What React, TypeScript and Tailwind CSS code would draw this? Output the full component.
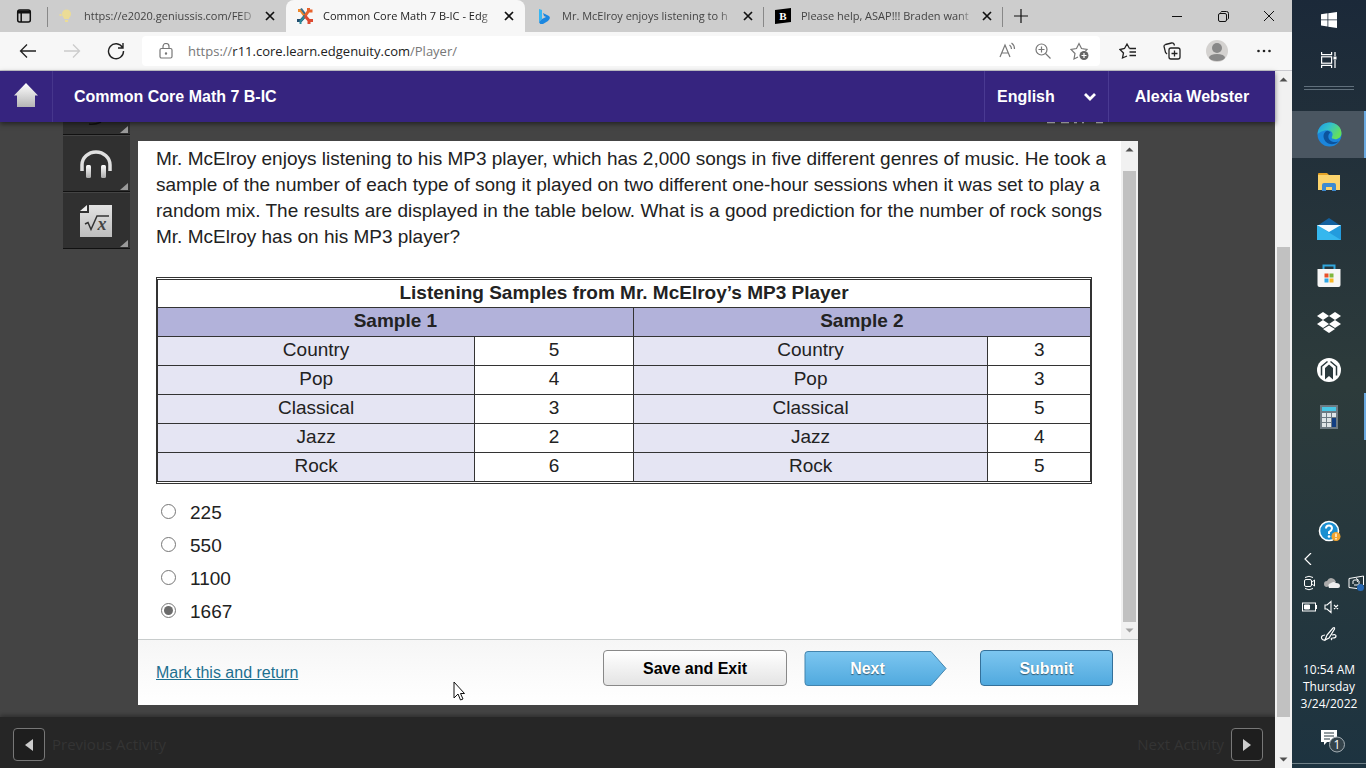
import { useState } from 'react';
import type { ReactNode } from 'react';

const GENRES = [
  { name: 'Country', first: 5, second: 3 },
  { name: 'Pop', first: 4, second: 3 },
  { name: 'Classical', first: 3, second: 5 },
  { name: 'Jazz', first: 2, second: 4 },
  { name: 'Rock', first: 6, second: 5 },
];

const ANSWERS = ['225', '550', '1100', '1667'];

function CloseIcon() {
  return (
    <svg className="h-[10px] w-[10px]" viewBox="0 0 10 10" fill="none" stroke="#111" strokeWidth="1.7">
      <path d="M1 1l8 8M9 1L1 9" />
    </svg>
  );
}

function Tab({ title, icon, active, divider }: { title: string; icon: ReactNode; active?: boolean; divider?: boolean }) {
  return (
    <div
      className={`relative flex w-[239px] shrink-0 items-center pl-[10px] ${
        active ? 'rounded-t-lg bg-[#f7f7f7] text-[#222]' : 'text-[#444]'
      }`}
    >
      <span className="flex w-[18px] shrink-0 justify-center">{icon}</span>
      <span className="ml-[9px] w-[174px] overflow-hidden whitespace-nowrap text-[11px] leading-4 [mask-image:linear-gradient(to_right,black_90%,transparent)]">
        {title}
      </span>
      <button aria-label="Close tab" className="ml-[7px] p-0">
        <CloseIcon />
      </button>
      {divider && <span className="absolute right-0 top-[7px] h-5 w-px bg-[#888]" />}
    </div>
  );
}

function TabStrip() {
  return (
    <div className="flex h-8 shrink-0 bg-[#cdcdcd]">
      <div className="flex w-[47px] shrink-0 items-center justify-center border-[#888]">
        <svg className="h-4 w-4" viewBox="0 0 16 16" fill="none" stroke="#111" strokeWidth="1.5">
          <rect x="1.7" y="2" width="12.6" height="12" rx="2" />
          <path d="M2 4h12" strokeWidth="3" />
          <path d="M5.2 5v9" />
        </svg>
      </div>
      <span className="-mr-px mt-[7px] h-5 w-px bg-[#888]" />
      <Tab
        title="https://e2020.geniussis.com/FED"
        icon={
          <svg className="h-4 w-4" viewBox="0 0 16 16" fill="#ebdc96">
            <circle cx="8.500" cy="6" r="4.500" />
            <path d="M6 9h5v2H6zM7 12h3v2H7zM1.500 6h2v2h-2z" />
          </svg>
        }
      />
      <Tab
        active
        title="Common Core Math 7 B-IC - Edg"
        icon={
          <svg className="h-[18px] w-[18px]" viewBox="0 0 18 18" fill="none" strokeWidth="3">
            <path d="M2 3.500h3L9 9" stroke="#f0882c" />
            <path d="M5 1.500l4.500 6" stroke="#3b6d8c" strokeWidth="2" />
            <path d="M12.500 1v3L9 9M16.500 4H13" stroke="#e8632c" />
            <path d="M1 13.500h4L9 9" stroke="#234e70" />
            <path d="M4.500 17v-3L9 9" stroke="#2d8a9a" strokeWidth="2" />
            <path d="M17 13.500h-4L9 9M13 17v-3" stroke="#dd4a30" />
          </svg>
        }
      />
      <Tab
        divider
        title="Mr. McElroy enjoys listening to h"
        icon={
          <svg className="h-4 w-4" viewBox="0 0 16 16">
            <path d="M3 1l3 1v9l-3 3z" fill="#38b6f2" />
            <path d="M3 14l3-3 4-2-2-1-1-3 6 3c2 2 0 4-1 5l-5 3c-2 1-3 0-4-2z" fill="#1b87e0" />
          </svg>
        }
      />
      <Tab
        divider
        title="Please help, ASAP!!! Braden want"
        icon={
          <svg className="h-4 w-4" viewBox="0 0 16 16">
            <path d="M0 2l16-2v14L0 16z" fill="#000" />
            <text x="8" y="12" textAnchor="middle" fontSize="11" fontWeight="700" fontFamily="Liberation Serif, serif" fill="#fff">
              B
            </text>
          </svg>
        }
      />
      <button aria-label="New tab" className="flex w-9 items-center justify-center">
        <svg className="h-[14px] w-[14px]" viewBox="0 0 14 14" stroke="#111" strokeWidth="1.2">
          <path d="M7 0v14M0 7h14" />
        </svg>
      </button>
      <div className="ml-auto flex">
        <button aria-label="Minimize" className="flex w-[46px] items-center justify-center">
          <svg className="h-[10px] w-[10px]" viewBox="0 0 10 10" stroke="#111">
            <path d="M0 5.500h10" />
          </svg>
        </button>
        <button aria-label="Restore" className="flex w-[46px] items-center justify-center">
          <svg className="h-[11px] w-[11px]" viewBox="0 0 11 11" fill="none" stroke="#111">
            <rect x="0.500" y="2.500" width="8" height="8" rx="1.500" />
            <path d="M2.500 1.500Q3 .5 4 .5h4.500q2 0 2 2V7q0 1-1 1.500" />
          </svg>
        </button>
        <button aria-label="Close window" className="flex w-[46px] items-center justify-center">
          <svg className="h-[10px] w-[10px]" viewBox="0 0 10 10" stroke="#111">
            <path d="M0 0l10 10M10 0L0 10" />
          </svg>
        </button>
      </div>
    </div>
  );
}

function Toolbar() {
  return (
    <div className="flex h-[39px] shrink-0 items-center border-b border-[#c9c9cf] bg-[#f7f7f7]">
      <button aria-label="Back" className="ml-[19px]">
        <svg className="h-[18px] w-[18px]" viewBox="0 0 18 18" fill="none" stroke="#222" strokeWidth="1.3">
          <path d="M17 9H1.500M8 2.500L1.500 9 8 15.500" />
        </svg>
      </button>
      <button aria-label="Forward" className="ml-[26px]">
        <svg className="h-[18px] w-[18px]" viewBox="0 0 18 18" fill="none" stroke="#ccc" strokeWidth="1.300">
          <path d="M1 9h15.500M10 2.500L16.500 9 10 15.500" />
        </svg>
      </button>
      <button aria-label="Refresh" className="ml-[26px]">
        <svg className="h-[18px] w-[18px]" viewBox="0 0 18 18" fill="none" stroke="#222" strokeWidth="1.400">
          <path d="M15.500 5.500A7.500 7.500 0 1 0 16.500 9M16 1v5h-5" />
        </svg>
      </button>
      <div className="ml-[17px] flex h-[30px] flex-1 items-center rounded bg-white pl-4 pr-[10px]">
        <svg className="h-4 w-4" viewBox="0 0 16 16" fill="none" stroke="#777" strokeWidth="1.200">
          <rect x="2" y="5.500" width="12" height="9.500" rx="1.500" />
          <path d="M5 5.500V3.500a3 3 0 0 1 6 0v2" />
          <circle cx="8" cy="10.500" r="0.600" fill="#777" />
        </svg>
        <div className="ml-[14px] flex-1 text-[13px] leading-5 text-[#777]">
          https://<span className="text-[#222]">r11.core.learn.edgenuity.com</span>/Player/
        </div>
        <div className="flex items-center gap-[18px]">
          <button aria-label="Read aloud">
            <svg className="h-[18px] w-[18px]" viewBox="0 0 18 18" fill="none" stroke="#777" strokeWidth="1.200">
              <path d="M2 15L7 3l5 12M4 11h6M11.500 3q2 1.500 2 4M13.500 1q3 2 3 6" />
            </svg>
          </button>
          <button aria-label="Zoom">
            <svg className="h-[18px] w-[18px]" viewBox="0 0 18 18" fill="none" stroke="#777" strokeWidth="1.200">
              <circle cx="7.500" cy="7.500" r="5.500" />
              <path d="M11.500 11.500l5 5M4.500 7.500h6M7.500 4.500v6" />
            </svg>
          </button>
          <button aria-label="Add to favorites">
            <svg className="h-5 w-5" viewBox="0 0 20 20" fill="none" stroke="#777" strokeWidth="1.200">
              <path d="M8 16l-4 2 1-5.500L1 8.500l5.500-1L9 2.500l2.500 5 5.500 1-1.500 1.500" />
              <circle cx="14" cy="14.500" r="4.500" fill="#666" stroke="none" />
              <path d="M14 12v5M11.500 14.500h5" stroke="#fff" />
            </svg>
          </button>
        </div>
      </div>
      <div className="ml-[18px] mr-5 flex items-center">
        <button aria-label="Favorites" className="flex w-5 justify-center">
          <svg className="h-[18px] w-[18px]" viewBox="0 0 18 18" fill="none" stroke="#222" strokeWidth="1.300">
            <path d="M8 14l-4.500 2 1-5L1 7.500l4.500-1L8 2l2.500 4.500M10.500 6.500H17M10.500 10H17M10.500 13.500H17" />
          </svg>
        </button>
        <button aria-label="Collections" className="ml-6 flex w-5 justify-center">
          <svg className="h-[18px] w-[18px]" viewBox="0 0 18 18" fill="none" stroke="#222" strokeWidth="1.300">
            <rect x="6" y="6" width="11" height="11" rx="2" />
            <path d="M11.500 8.500v6M8.500 11.500h6M4 12L2.500 10.500 1 4.500Q.8 3 2.500 2.500L8.500 1Q10 .8 11 2l.5 1.500" />
          </svg>
        </button>
        <button aria-label="Profile" className="ml-6 flex w-[22px] justify-center">
          <svg className="h-[22px] w-[22px]" viewBox="0 0 22 22">
            <circle cx="11" cy="11" r="11" fill="#d4d2d0" />
            <circle cx="11" cy="8" r="5" fill="#888" />
            <ellipse cx="11" cy="17.500" rx="8" ry="3.500" fill="#888" />
          </svg>
        </button>
        <button aria-label="Settings and more" className="ml-7 flex w-4 justify-center">
          <svg className="h-4 w-4" viewBox="0 0 16 16" fill="#222">
            <circle cx="2.500" cy="8" r="1.300" />
            <circle cx="8" cy="8" r="1.300" />
            <circle cx="13.500" cy="8" r="1.300" />
          </svg>
        </button>
      </div>
    </div>
  );
}

function CourseHeader() {
  return (
    <header className="relative z-10 flex h-[51px] shrink-0 items-stretch bg-[#36247f] text-[16px] font-bold text-white shadow-[0_2px_5px_rgba(0,0,0,0.5)]">
      <a href="#home" aria-label="Home" className="flex w-[53px] items-center justify-center border-r border-[#46368c] pb-1">
        <svg className="h-6 w-6" viewBox="0 0 24 24">
          <defs>
            <linearGradient id="home" x1="0" y1="0" x2="0" y2="1">
              <stop offset="0" stopColor="#fff" />
              <stop offset="1" stopColor="#b5b5b5" />
            </linearGradient>
          </defs>
          <path d="M12 0l12 12.500h-3V24H3V12.500H0z" fill="url(#home)" />
        </svg>
      </a>
      <h1 className="flex items-center pl-[21px]">Common Core Math 7 B-IC</h1>
      <div className="relative ml-auto flex w-[124px] items-center border-l border-[#4a3a92]">
        <select aria-label="Language" className="h-full w-full appearance-none bg-transparent pl-3 outline-none">
          <option>English</option>
        </select>
        <svg className="pointer-events-none absolute right-[11px] h-3 w-[14px]" viewBox="0 0 14 12" fill="none" stroke="#fff" strokeWidth="2.800">
          <path d="M2 3l5 5 5-5" />
        </svg>
      </div>
      <div className="flex w-[167px] items-center justify-center border-l border-[#4a3a92]">Alexia Webster</div>
    </header>
  );
}

function Tool({ label, children }: { label: string; children: ReactNode }) {
  return (
    <button
      aria-label={label}
      className="relative flex h-14 w-[67px] items-center justify-center border-b border-[#111] bg-[#303030] pr-[2px]"
    >
      {children}
      <Corner />
    </button>
  );
}

function Corner() {
  return (
    <svg className="absolute bottom-px right-[2px] h-[7px] w-2" viewBox="0 0 8 7">
      <path d="M8 0v7H0z" fill="#999" />
    </svg>
  );
}

function ToolRail() {
  return (
    <nav className="ml-[63px] flex w-[67px] shrink-0 flex-col gap-px">
      <div className="relative h-[13px] border-b border-[#111] bg-[#303030]">
        <svg className="mx-auto h-2 w-7" viewBox="0 0 28 8">
          <path d="M6 2q6 1 12-2" fill="none" stroke="#111" strokeWidth="1.500" />
        </svg>
        <Corner />
      </div>
      <Tool label="Audio">
        <svg className="h-8 w-8" viewBox="0 0 32 32">
          <defs>
            <linearGradient id="phones" x1="0" y1="0" x2="0" y2="1">
              <stop offset="0" stopColor="#fff" />
              <stop offset="1" stopColor="#aaa" />
            </linearGradient>
          </defs>
          <path d="M2 23v-6a14 13 0 0 1 28 0v6" fill="none" stroke="#e0e0e0" strokeWidth="3.500" />
          <rect x="6" y="17" width="5" height="13" rx="1.500" fill="url(#phones)" />
          <rect x="21" y="17" width="5" height="13" rx="1.500" fill="url(#phones)" />
        </svg>
      </Tool>
      <Tool label="Formulas">
        <svg className="h-[34px] w-[34px]" viewBox="0 0 34 34">
          <defs>
            <linearGradient id="sheet" x1="0" y1="0" x2="0" y2="1">
              <stop offset="0" stopColor="#e2e2e2" />
              <stop offset="1" stopColor="#bdbdbd" />
            </linearGradient>
          </defs>
          <path d="M10 1h23v32H1V9h9z" fill="url(#sheet)" />
          <path d="M8 1v6H1z" fill="#eee" />
          <path d="M6 20l3-1.500 3 7L18 12h12" fill="none" stroke="#333" strokeWidth="1.500" />
          <text x="23" y="26" textAnchor="middle" fontSize="18" fontStyle="italic" fontWeight="700" fontFamily="Liberation Serif, serif" fill="#444">
            x
          </text>
        </svg>
      </Tool>
    </nav>
  );
}

function Arrow({ up, color }: { up?: boolean; color: string }) {
  return (
    <svg className="h-[17px] w-full shrink-0" viewBox="0 0 17 17">
      <path d={up ? 'M4.500 10.500h8l-4-4z' : 'M4.500 6.500h8l-4 4z'} fill={color} />
    </svg>
  );
}

function SampleTable() {
  const heading = 'border border-[#333] p-0 pb-[2px]';
  const label = 'border border-[#333] bg-[#e5e5f3] p-0 pb-[2px]';
  const value = 'border border-[#333] p-0 pb-[2px]';
  return (
    <div className="border border-[#333] pb-px pt-px">
      <table className="w-full table-fixed border-collapse text-center text-[19px] leading-6">
        <colgroup>
          <col className="w-[34%]" />
          <col className="w-[17%]" />
          <col className="w-[38%]" />
          <col className="w-[11%]" />
        </colgroup>
        <thead>
          <tr className="h-7">
            <th colSpan={4} className={heading}>
              Listening Samples from Mr. McElroy’s MP3 Player
            </th>
          </tr>
          <tr className="h-[29px] bg-[#b2b2da]">
            <th colSpan={2} className={heading}>Sample 1</th>
            <th colSpan={2} className={heading}>Sample 2</th>
          </tr>
        </thead>
        <tbody>
          {GENRES.map((genre) => (
            <tr key={genre.name} className="h-[29px]">
              <td className={label}>{genre.name}</td>
              <td className={value}>{genre.first}</td>
              <td className={label}>{genre.name}</td>
              <td className={value}>{genre.second}</td>
            </tr>
          ))}
        </tbody>
      </table>
    </div>
  );
}

function Question() {
  const [answer, setAnswer] = useState('1667');

  return (
    <div className="flex min-h-0 flex-1 text-[#222]">
      <div className="min-w-0 flex-1 pl-[18px] pt-[5px]">
        <p className="text-[19px] leading-[26px]">
          Mr. McElroy enjoys listening to his MP3 player, which has 2,000 songs in five different genres of music. He took a
          sample of the number of each type of song it played on two different one-hour sessions when it was set to play a
          random mix. The results are displayed in the table below. What is a good prediction for the number of rock songs Mr.
          McElroy has on his MP3 player?
        </p>
        <div className="mr-[29px] mt-[27px]">
          <SampleTable />
        </div>
        <fieldset className="mt-3">
          {ANSWERS.map((option) => (
            <label key={option} className="flex h-[33px] items-center pl-[5px] text-[19px] leading-6">
              <input
                type="radio"
                name="answer"
                value={option}
                checked={answer === option}
                onChange={() => setAnswer(option)}
                className="mb-[3px] mr-[14px] h-[15px] w-[15px] appearance-none rounded-full border border-[#767676] bg-white bg-clip-content p-[2px] checked:bg-[#6b6b6b]"
              />
              {option}
            </label>
          ))}
        </fieldset>
      </div>
      <div className="flex w-[17px] shrink-0 flex-col bg-[#f1f1f1]">
        <Arrow up color="#505050" />
        <div className="mx-[2px] mt-[13px] flex-1 bg-[#c1c1c1]" />
        <Arrow color="#a3a3a3" />
      </div>
    </div>
  );
}

function Actions() {
  return (
    <div className="flex h-[66px] shrink-0 items-start border-t border-[#c8cccc] bg-linear-to-b from-[#f6f6f6] to-white pl-[18px] pr-[25px] pt-[10px] text-[16px]">
      <a href="#return" className="mt-3 leading-[22px] text-[#1d7090] underline">
        Mark this and return
      </a>
      <button className="ml-auto h-9 w-[184px] rounded border border-[#888] bg-linear-to-b from-white to-[#e4e4e4] pt-px font-bold text-black">
        Save and Exit
      </button>
      <button className="relative ml-[17px] h-9 w-[143px] pr-4 pt-px font-bold text-white [text-shadow:0_1px_1px_rgba(0,0,0,0.5)]">
        <svg className="absolute inset-0 h-full w-full" viewBox="0 0 143 36">
          <defs>
            <linearGradient id="next" x1="0" y1="0" x2="0" y2="1">
              <stop offset="0" stopColor="#7cc6f0" />
              <stop offset="1" stopColor="#50a9de" />
            </linearGradient>
          </defs>
          <path d="M4 1.500h123L142 18.500 127 35.500H4q-3 0-3-3V4.500q0-3 3-3z" fill="url(#next)" stroke="#4384ad" />
        </svg>
        <span className="relative">Next</span>
      </button>
      <button className="ml-[33px] h-9 w-[133px] rounded border border-[#34709a] bg-linear-to-b from-[#7cc6f0] to-[#50a9de] pt-px font-bold text-white [text-shadow:0_1px_1px_rgba(0,0,0,0.5)]">
        Submit
      </button>
    </div>
  );
}

function ActivityFooter() {
  const box = 'flex h-[33px] w-8 items-center justify-center rounded border border-[#777] bg-[#1e1e1e]';
  return (
    <footer className="flex h-[51px] shrink-0 items-center justify-between bg-[#262626] pl-[13px] pr-3 pt-1 font-['Open_Sans',sans-serif] text-[15px] text-[#343434] shadow-[0_-2px_4px_rgba(0,0,0,0.3)]">
      <div className="flex items-center gap-[7px]">
        <button aria-label="Go to previous activity" className={box}>
          <svg className="h-3 w-2" viewBox="0 0 8 12">
            <path d="M8 0v12L0 6z" fill="#ccc" />
          </svg>
        </button>
        Previous Activity
      </div>
      <div className="flex items-center gap-[7px]">
        Next Activity
        <button aria-label="Go to next activity" className={box}>
          <svg className="h-3 w-2" viewBox="0 0 8 12">
            <path d="M0 0v12l8-6z" fill="#ccc" />
          </svg>
        </button>
      </div>
    </footer>
  );
}

function TaskButton({ label, active, running, children }: { label: string; active?: boolean; running?: boolean; children: ReactNode }) {
  return (
    <button
      aria-label={label}
      className={`flex h-[47px] w-full items-center justify-center border-[#6aa9e0] ${active ? 'bg-[#4a5661]' : ''} ${
        active || running ? 'border-r-2 pl-[2px]' : ''
      }`}
    >
      {children}
    </button>
  );
}

function Taskbar() {
  return (
    <aside className="flex w-[74px] shrink-0 flex-col items-center bg-linear-to-b from-[#1b2939] via-[#2d3b3b] to-[#1d3340] font-['Open_Sans',sans-serif] text-white">
      <button aria-label="Start" className="flex h-10 items-center">
        <svg className="h-4 w-4" viewBox="0 0 16 16" fill="#fff">
          <path d="M0 2.200l6.500-.9v6.200H0zM7.300 1.200L16 0v7.500H7.300zM0 8.300h6.500v6.200L0 13.600zM7.300 8.300H16V16l-8.700-1.200z" />
        </svg>
      </button>
      <button aria-label="Task view" className="flex h-10 items-center">
        <svg className="h-4 w-4" viewBox="0 0 16 16" fill="none" stroke="#fff" strokeWidth="1.200">
          <path d="M.6 0v2.600h10V0M.6 16v-2.600h10V16M14 0v4M14 8v8" />
          <rect x="0.600" y="4.800" width="10" height="6.400" />
          <path d="M12.500 6h3" strokeWidth="3" />
        </svg>
      </button>
      <div className="mb-[21px] mt-[6px] h-1 w-[50px] border-y border-[#61707c]" />

      <TaskButton label="Edge" active>
        <svg className="h-[25px] w-[25px]" viewBox="0 0 24 24">
          <defs>
            <linearGradient id="edgeTop" x1="0" y1="0" x2="1" y2="0.500">
              <stop offset="0" stopColor="#1c9be8" />
              <stop offset="0.500" stopColor="#35c1c8" />
              <stop offset="1" stopColor="#66e05a" />
            </linearGradient>
          </defs>
          <circle cx="12" cy="12" r="11.500" fill="#1b86dc" />
          <path d="M.5 12C1 4 7 .5 12 .5c7 0 11.500 5 11.500 10 0 4-3 6-6 6-2.500 0-4-1-3-2.500C16 11 14 8 10 8 5 8 1.500 10.500.5 12z" fill="url(#edgeTop)" />
          <path d="M10 8.500c-4 1-5 6-2 10 3 3.500 9 4 13 0-2 1-7 1.500-9-1.500-2-2.500-1-6 1-7-1-1-2-1.500-3-1.500z" fill="#0c539d" />
        </svg>
      </TaskButton>
      <TaskButton label="File Explorer">
        <svg className="h-[22px] w-[22px]" viewBox="0 0 22 22">
          <path d="M0 3q0-1 1-1h8l2 2h-11z" fill="#e5a326" />
          <path d="M0 4h22v15H0z" fill="#fcd46c" />
          <path d="M4 20v-6q0-2 2-2h10q2 0 2 2v6h-4v-4H8v4z" fill="#3e8bd0" />
        </svg>
      </TaskButton>
      <TaskButton label="Mail">
        <svg className="h-6 w-6" viewBox="0 0 24 24">
          <path d="M0 9l12-8 12 8z" fill="#12609f" />
          <path d="M0 8h24v15H0z" fill="#239bdd" />
          <path d="M0 8l24 15H0z" fill="#35b7ee" />
          <path d="M0 8h24L12 15z" fill="#f5fbff" />
        </svg>
      </TaskButton>
      <TaskButton label="Microsoft Store">
        <svg className="h-6 w-6" viewBox="0 0 24 24">
          <path d="M6.500 6V1.500h11V6" fill="none" stroke="#31a6dc" strokeWidth="2" />
          <path d="M0.500 5h23v16q0 2-2 2h-19q-2 0-2-2z" fill="#f6f6f6" />
          <path d="M7.500 9.500h4v4h-4z" fill="#e8512a" />
          <path d="M12.500 9.500h4v4h-4z" fill="#7fb73d" />
          <path d="M7.500 14.500h4v4h-4z" fill="#2fa7e6" />
          <path d="M12.500 14.500h4v4h-4z" fill="#f8b725" />
        </svg>
      </TaskButton>
      <TaskButton label="Dropbox">
        <svg className="h-6 w-6" viewBox="0 0 24 24" fill="#fff">
          <path d="M6 1l6 4-6 4-6-4zM18 1l6 4-6 4-6-4zM6 9l6 4-6 4-6-4zM18 9l6 4-6 4-6-4zM12 14.500l6 3.500-6 4-6-4z" />
        </svg>
      </TaskButton>
      <TaskButton label="Reader">
        <svg className="h-6 w-6" viewBox="0 0 24 24">
          <circle cx="12" cy="12" r="12" fill="#fff" />
          <path d="M4.500 17.500V8.500L10.500 3.500M19.500 17.500V8.500L13.500 3.500" fill="none" stroke="#2a383c" strokeWidth="1.500" />
          <path d="M8 21.500V10l4-3.500 4 3.500v11.500L12 18z" fill="#2a383c" />
        </svg>
      </TaskButton>
      <TaskButton label="Calculator" running>
        <svg className="h-6 w-[18px]" viewBox="0 0 18 24">
          <path d="M0 0h18v24H0z" fill="#6d7a83" />
          <path d="M2 2h14v4H2z" fill="#48c6e5" />
          <path d="M2 8h4v4H2zM7 8h4v4H7zM12 8h4v4h-4zM2 13h4v4H2zM7 13h4v4H7zM2 18h4v4H2zM7 18h4v4H7z" fill="#dfe5e8" />
          <path d="M12 13h4v9h-4z" fill="#123e82" />
        </svg>
      </TaskButton>

      <div className="mt-auto flex flex-col items-center">
        <svg className="ml-[2px] h-6 w-6" viewBox="0 0 24 24">
          <circle cx="11" cy="11" r="9.500" fill="#1b8fd1" stroke="#fff" strokeWidth="1.600" />
          <path d="M8 8.500Q8 5.500 11 5.500T14 8.500Q14 10 11 12v2" fill="none" stroke="#fff" strokeWidth="2" />
          <circle cx="11" cy="16.500" r="1.300" fill="#fff" />
          <circle cx="18" cy="16.500" r="4.500" fill="#f0a531" />
          <path d="M18 13.500v3.500M18 18v1.500" stroke="#fff" strokeWidth="1.300" />
        </svg>
        <svg className="ml-3 mt-[9px] h-3 w-2 self-start" viewBox="0 0 8 12" fill="none" stroke="#fff" strokeWidth="1.200">
          <path d="M7 0L1 6l6 6" />
        </svg>
        <div className="mt-[10px] flex w-[74px] items-center gap-2 pl-[12px]">
          <svg className="h-4 w-3 shrink-0" viewBox="0 0 12 16" fill="none" stroke="#fff">
            <rect x="0.500" y="4.500" width="7" height="7" rx="1.500" />
            <path d="M7.500 7.500L10.500 5v6L7.500 8.500M1 2.500Q5 0 9 2.500M1 13.500q4 2.500 8 0" />
          </svg>
          <svg className="h-3 w-4 shrink-0" viewBox="0 0 16 12">
            <path d="M3 10a3 3 0 0 1 0-6Q5 0 9 1.500 11 2 12 5z" fill="#aaa" />
            <path d="M5 11q-2-4 2-5 3-2 5 0 4 0 4 3 0 2-2 2z" fill="#eee" />
          </svg>
          <svg className="h-4 w-4 shrink-0" viewBox="0 0 16 16" fill="none" stroke="#fff">
            <path d="M1 3.500L15.500 1M1 3.500v9l8 1M15.500 1v9M5 9V6q0-1 2-1h3M8 3.500L10.500 5 9 7M11 6v3q0 1-2 1H6" />
            <circle cx="12.500" cy="12.500" r="3.500" fill="#2768b2" stroke="none" />
          </svg>
        </div>
        <div className="mt-2 flex w-[74px] items-center gap-[6px] pl-[10px]">
          <svg className="h-4 w-4" viewBox="0 0 16 16" fill="none" stroke="#fff">
            <rect x="0.500" y="4" width="13" height="8" />
            <path d="M2.500 6h5v4h-5z" fill="#fff" />
            <path d="M14.500 6v4" />
          </svg>
          <svg className="h-4 w-4" viewBox="0 0 16 16" fill="none" stroke="#fff" strokeWidth="1.100">
            <path d="M1 6h2l4-3.500v11L3 10H1zM10 6l4 4M14 6l-4 4" />
          </svg>
        </div>
        <svg className="mt-[11px] h-[18px] w-[18px]" viewBox="0 0 18 18" fill="none" stroke="#fff" strokeWidth="1.200">
          <path d="M5 9Q1 9.500 1.500 12T6 14M5 14l2-5 6-7q2-1 1.500 1L9 12zM12 9q4-1 4 1t-3 2-1 2" />
        </svg>
        <div className="mt-[17px] text-center text-[12px] leading-[17px]">
          10:54 AM
          <br />
          Thursday
          <br />
          3/24/2022
        </div>
        <svg className="ml-2 mt-[17px] h-6 w-6" viewBox="0 0 24 24">
          <path d="M0 1h16v12H6l-3 3v-3H0z" fill="#fff" />
          <path d="M3 4h10M3 7h10M3 10h6" stroke="#263840" />
          <circle cx="16" cy="15.500" r="7.500" fill="#34434b" stroke="#a5afb5" />
          <text x="16" y="20" textAnchor="middle" fontSize="12" fill="#fff">
            1
          </text>
        </svg>
        <div className="mb-1 mt-[10px] h-px w-[74px] bg-[#6f8088]" />
      </div>
    </aside>
  );
}

export default function App() {
  return (
    <div className="flex h-screen overflow-hidden font-['Liberation_Sans',Arial,sans-serif]">
      <div className="flex min-w-0 flex-1 flex-col font-['Open_Sans',sans-serif]">
        <TabStrip />
        <Toolbar />
        <div className="flex min-h-0 flex-1 font-['Liberation_Sans',Arial,sans-serif]">
          <div className="flex min-w-0 flex-1 flex-col bg-[#444]">
            <CourseHeader />
            <main className="relative flex min-h-0 flex-1">
              <ToolRail />
              <section className="mb-3 ml-2 mr-[137px] mt-[19px] flex min-w-0 flex-1 flex-col bg-white">
                <Question />
                <Actions />
              </section>
              {/* lower edge of the timer digits that scroll under the header */}
              <svg className="absolute right-[170px] top-0 h-[2px] w-[60px]" viewBox="0 0 60 2" stroke="#ddd" strokeWidth="1.500">
                <path d="M2 .5h8M16 .5h8M29 .5h3M37 .5h2M51 .5h7" />
              </svg>
              <svg className="absolute left-[453px] top-[559px] h-5 w-3" viewBox="0 0 12 20">
                <path d="M1 1v16l4-4 2.500 6 2.500-1-2.500-5.500h4z" fill="#fff" stroke="#111" />
              </svg>
            </main>
            <ActivityFooter />
          </div>
          <div className="flex w-[17px] shrink-0 flex-col bg-[#f1f1f1]">
            <Arrow up color="#505050" />
            <div className="mx-[2px] mb-[34px] mt-[159px] flex-1 bg-[#c1c1c1]" />
            <Arrow color="#505050" />
          </div>
        </div>
      </div>
      <Taskbar />
    </div>
  );
}
